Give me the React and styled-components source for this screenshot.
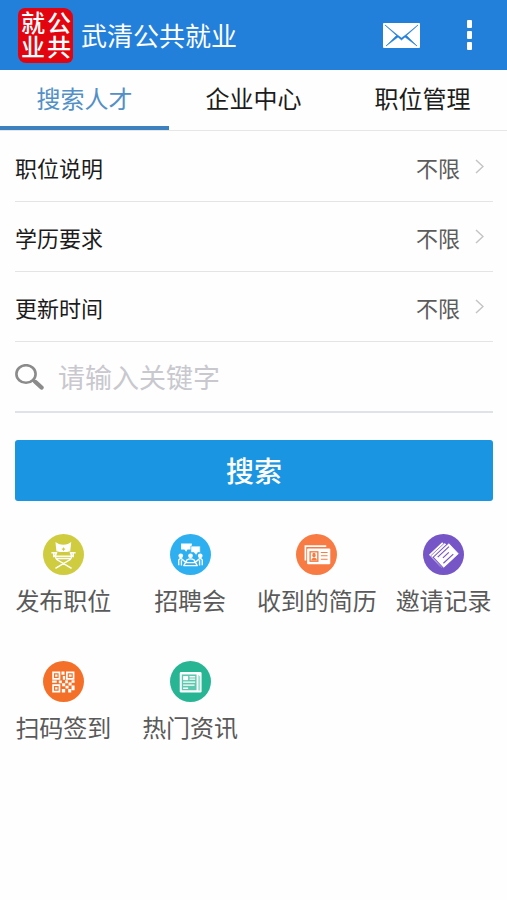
import styled, { createGlobalStyle } from 'styled-components'

const GlobalStyle = createGlobalStyle`
  * {
    box-sizing: border-box;
  }
  body {
    margin: 0;
    background: #fefefe;
    color: #1c1c1c;
    font-family: 'Noto Sans CJK SC', 'Noto Sans', sans-serif;
  }
  button,
  input,
  select {
    margin: 0;
    padding: 0;
    border: 0;
    background: none;
    color: inherit;
    font: inherit;
  }
`

const Header = styled.header`
  display: flex;
  align-items: center;
  height: 70px;
  padding: 0 18px;
  background: #2380da;
  color: #fff;
`

// read top to bottom, right column first
const Seal = styled.div`
  display: flex;
  flex-direction: column;
  align-items: center;
  justify-content: center;
  width: 55px;
  height: 55px;
  border-radius: 7px 9px 6px 8px;
  background: #e2040f;
  font-size: 24px;
  font-weight: 500;
  line-height: 26px;
  writing-mode: vertical-rl;
`

const SealColumn = styled.span`
  display: block;
`

const Title = styled.h1`
  flex: 1;
  margin: 0 0 0 8px;
  font-size: 26px;
  font-weight: 400;
  line-height: 36px;
`

const IconButton = styled.button`
  display: flex;
  align-items: center;
  justify-content: center;
  width: ${({ $width }) => $width}px;
  height: 40px;
`

const HeaderActions = styled.div`
  display: flex;
  gap: 29px;
`

const Tabs = styled.nav`
  display: grid;
  grid-template-columns: repeat(3, 1fr);
  height: 61px;
  border-bottom: 1px solid #e6e6e6;
`

const Tab = styled.a`
  height: 60px;
  border-bottom: 4px solid ${({ $active }) => ($active ? '#3d82bf' : 'transparent')};
  color: ${({ $active }) => ($active ? '#5290c6' : '#1c1c1c')};
  font-size: 24px;
  line-height: 56px;
  text-align: center;
  text-decoration: none;
`

const SearchForm = styled.form`
  padding: 1px 14px 0 15px;
`

const FilterRow = styled.div`
  display: flex;
  align-items: center;
  height: 70px;
  padding-right: 9px;
  border-bottom: 1px solid #e4e4e4;
`

const FilterLabel = styled.label`
  flex: 1;
  font-size: 22px;
  line-height: 32px;
`

const FilterSelect = styled.select`
  height: 32px;
  margin-right: 15px;
  appearance: none;
  color: #5c5c5c;
  font-size: 22px;
  line-height: 32px;
  text-align-last: right;
`

const KeywordRow = styled.div`
  display: flex;
  align-items: center;
  gap: 14px;
  height: 71px;
  border-bottom: 2px solid #dfe2e6;
`

const KeywordInput = styled.input`
  flex: 1;
  min-width: 0;
  height: 44px;
  outline: 0;
  font-size: 27px;

  &::placeholder {
    color: #c8c8ce;
    opacity: 1;
  }
`

const SubmitButton = styled.button`
  display: block;
  width: 100%;
  height: 61px;
  margin-top: 27px;
  border-radius: 3px;
  background: #1a95e2;
  color: #fff;
  font-size: 28px;
  font-weight: 500;
  line-height: 61px;
`

const Shortcuts = styled.nav`
  display: grid;
  grid-template-columns: repeat(4, 1fr);
  row-gap: 43px;
  margin-top: 33px;
`

const Shortcut = styled.a`
  display: flex;
  flex-direction: column;
  align-items: center;
  gap: 7px;
  color: #5a5a5a;
  font-size: 24px;
  line-height: 36px;
  text-decoration: none;
  white-space: nowrap;
`

const Badge = styled.svg`
  width: 41px;
  height: 41px;
`

const MailIcon = () => (
  <svg width="37" height="25" viewBox="0 0 37 25" aria-hidden="true">
    <rect width="37" height="25" rx="1" fill="#fff" />
    <path
      d="M2 2 13.5 12.5 3 23 15 14 18.5 17 22 14 34 23 23.5 12.5 35 2 22 12.5 18.5 15 15 12.5Z"
      fill="#2380da"
      stroke="#2380da"
      strokeWidth=".6"
    />
  </svg>
)

const MoreIcon = () => (
  <svg width="5" height="30" viewBox="0 0 5 30" fill="#fff" aria-hidden="true">
    <rect width="5" height="8" rx="1" />
    <rect y="11" width="5" height="8" rx="1" />
    <rect y="22" width="5" height="8" rx="1" />
  </svg>
)

const ChevronIcon = () => (
  <svg width="9" height="15" viewBox="0 0 9 15" fill="none" aria-hidden="true">
    <path d="M1 1 8 7.5 1 14" stroke="#c4c4c4" strokeWidth="1.5" />
  </svg>
)

const SearchIcon = () => (
  <svg width="29" height="26" viewBox="0 0 29 26" fill="none" stroke="#8b8b8b" aria-hidden="true">
    <ellipse cx="11" cy="10" rx="9.6" ry="8.8" strokeWidth="2.6" />
    <path d="M18 16 20 18" strokeWidth="3" />
    <path d="M20.5 18 26.5 23.5" strokeWidth="4.4" strokeLinecap="round" />
  </svg>
)

const ChairGlyph = ({ color }) => (
  <>
    <path d="M-24-37-14-31Q0-27 13-31L23-37 20-10Q0-5-21-10Z" fill="#fff" />
    <path d="M-5-16H5M0-21V-11" stroke={color} strokeWidth="3" />
    <path
      d="M-36-5H-23M23-5H36M-29-5V8M29-5V8M-20-7-26 7M20-7 26 7M-24 5H24M-19 12H19M-24 8-20 15 24 41M24 8 20 15-24 41"
      fill="none"
      stroke="#fff"
      strokeWidth="4.5"
    />
  </>
)

const MeetingGlyph = ({ color }) => (
  <>
    <path d="M-28-33H4V-15H-9L-13-8-18-15H-28Z" fill="#fff" />
    <path d="M1-25H29V-6H22L17 2 10-6H1Z" fill="#fff" stroke={color} strokeWidth="2" />
    <g fill="#fff">
      <circle cx="-29" cy="4" r="7" />
      <circle cx="29" cy="4" r="7" />
      <circle cx="0" cy="4" r="7" />
    </g>
    <path
      d="M-35 32V16Q-29 9-23 16L-14 23M35 32V16Q29 9 23 16L14 23M-12 22V17Q0 9 12 17V22M-27 17V33M27 17V33M-15 24H15L20 33H-20Z"
      fill="none"
      stroke="#fff"
      strokeWidth="4"
      strokeLinejoin="round"
    />
  </>
)

const ResumeGlyph = ({ color }) => (
  <>
    <path d="M-33 18V-25H29" fill="none" stroke="#fff" strokeWidth="5" />
    <rect x="-28" y="-18" width="69" height="47" rx="3" fill="#fff" />
    <rect x="-21" y="-10" width="27" height="32" fill={color} />
    <rect x="-17" y="-6" width="19" height="24" fill="#fff" />
    <ellipse cx="-7.5" cy="2" rx="5" ry="7" fill={color} />
    <path d="M-15 18Q-15 10-7 10T1 18Z" fill={color} />
    <path d="M13-6H33M13 4H33M13 14H33" stroke={color} strokeWidth="3" />
  </>
)

const RecordsGlyph = ({ color }) => (
  <g transform="rotate(-43)">
    <rect x="-32" y="-29" width="54" height="48" fill="#fff" />
    <rect x="-31" y="-23" width="58" height="49" fill="#fff" stroke={color} strokeWidth="2" />
    <rect x="-28" y="-15" width="64" height="46" fill="#fff" stroke={color} strokeWidth="3" />
    <path d="M-18-6H28M-8 6H16M-18 19H22" stroke={color} strokeWidth="3.5" />
  </g>
)

const CodeGlyph = () => (
  <>
    <path
      d="M-31-27H-12V-8H-31ZM10-27H30V-8H10ZM-31 11H-12V30H-31Z"
      fill="none"
      stroke="#fff"
      strokeWidth="5"
    />
    <path
      d="M-25-21H-18V-14H-25ZM16-21H24V-14H16ZM-25 17H-18V24H-25ZM-6-30H3V-20H-6ZM-2-16H5V-5H-2ZM-34-3H-20V4H-34ZM-14-3H-5V5H-14ZM-4 5H5V14H-4ZM5-4H13V5H5ZM15 3H24V12H15ZM24-4H33V4H24ZM6 13H15V21H6ZM24 12H33V26H24ZM-5 22H5V33H-5ZM14 22H23V33H14Z"
      fill="#fff"
    />
  </>
)

const NewsGlyph = ({ color }) => (
  <>
    <rect x="-32" y="-28" width="65" height="61" rx="4" fill="#fff" />
    <path d="M-26-21H18V26H-26Z" fill={color} opacity=".75" />
    <path d="M23-20 29-15V27H23Z" fill={color} opacity=".45" />
    <rect x="-22" y="-16" width="15" height="12" fill="#fff" />
    <path d="M-3-14H14M-3-7H14M-22 2H14M-22 11H12M-22 20H-7" stroke="#fff" strokeWidth="4" />
  </>
)

const filters = [
  { id: 'position', label: '职位说明' },
  { id: 'education', label: '学历要求' },
  { id: 'updated', label: '更新时间' },
]

const shortcuts = [
  { label: '发布职位', color: '#cfcd3f', Glyph: ChairGlyph },
  { label: '招聘会', color: '#2eb0f0', Glyph: MeetingGlyph },
  { label: '收到的简历', color: '#f77b42', Glyph: ResumeGlyph },
  { label: '邀请记录', color: '#7655c7', Glyph: RecordsGlyph },
  { label: '扫码签到', color: '#f47029', Glyph: CodeGlyph },
  { label: '热门资讯', color: '#28b594', Glyph: NewsGlyph },
]

export default function App() {
  return (
    <>
      <GlobalStyle />
      <Header>
        <Seal>
          <SealColumn>公共</SealColumn>
          <SealColumn>就业</SealColumn>
        </Seal>
        <Title>武清公共就业</Title>
        <HeaderActions>
          <IconButton type="button" $width={37} aria-label="消息">
            <MailIcon />
          </IconButton>
          <IconButton type="button" $width={40} aria-label="更多">
            <MoreIcon />
          </IconButton>
        </HeaderActions>
      </Header>
      <Tabs>
        <Tab href="#talent" $active aria-current="page">
          搜索人才
        </Tab>
        <Tab href="#company">企业中心</Tab>
        <Tab href="#jobs">职位管理</Tab>
      </Tabs>
      <main>
        <SearchForm onSubmit={(event) => event.preventDefault()}>
          {filters.map(({ id, label }) => (
            <FilterRow key={id}>
              <FilterLabel htmlFor={id}>{label}</FilterLabel>
              <FilterSelect id={id}>
                <option>不限</option>
              </FilterSelect>
              <ChevronIcon />
            </FilterRow>
          ))}
          <KeywordRow>
            <SearchIcon />
            <KeywordInput type="text" placeholder="请输入关键字" aria-label="关键字" />
          </KeywordRow>
          <SubmitButton type="submit">搜索</SubmitButton>
        </SearchForm>
        <Shortcuts>
          {shortcuts.map(({ label, color, Glyph }) => (
            <Shortcut key={label} href="#">
              <Badge viewBox="-61 -61 122 122" aria-hidden="true">
                <circle r="61" fill={color} />
                <Glyph color={color} />
              </Badge>
              {label}
            </Shortcut>
          ))}
        </Shortcuts>
      </main>
    </>
  )
}
